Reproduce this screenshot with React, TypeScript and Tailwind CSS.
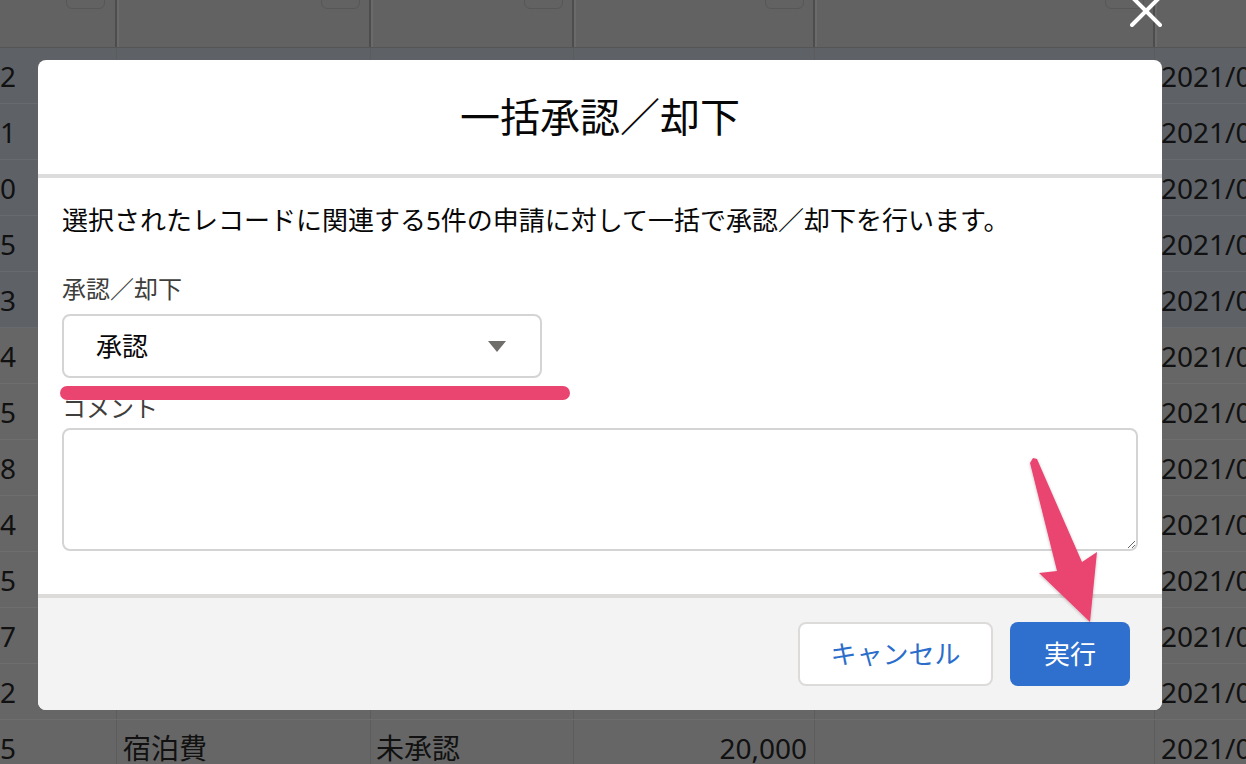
import React from 'react';

const FONT = { fontFamily: '"Noto Sans", "Noto Sans CJK JP", sans-serif' };

const ROWS = [
  { id: 1, n: '2', sel: true },
  { id: 2, n: '1', sel: true },
  { id: 3, n: '0', sel: true },
  { id: 4, n: '5', sel: true },
  { id: 5, n: '3', sel: true },
  { id: 6, n: '4' },
  { id: 7, n: '5' },
  { id: 8, n: '8' },
  { id: 9, n: '4' },
  { id: 10, n: '5' },
  { id: 11, n: '7' },
  { id: 12, n: '2' },
  { id: 13, n: '5', item: '宿泊費', status: '未承認', amount: '20,000' },
];

type Row = { id: number; n: string; sel?: boolean; item?: string; status?: string; amount?: string };

const SortBox = () => (
  <div className="w-[39px] h-[22px] -mt-[13px] rounded-[6px] border border-[#575757]"></div>
);

const HeaderRow: React.FC = () => (
  <div className="flex h-[48px] bg-[#626262] border-b border-[#555555]">
    <div className="w-[117px] shrink-0 flex justify-end pr-[10px] border-r-[2px] border-[#4d4d4d]"><SortBox /></div>
    <div className="w-[254px] shrink-0 flex justify-end pr-[9px] border-r-[2px] border-[#4d4d4d] border-l-[2px] border-l-[#6a6a6a]"><SortBox /></div>
    <div className="w-[203px] shrink-0 flex justify-end pr-[9px] border-r-[2px] border-[#4d4d4d] border-l-[2px] border-l-[#6a6a6a]"><SortBox /></div>
    <div className="w-[241px] shrink-0 flex justify-end pr-[9px] border-r-[2px] border-[#4d4d4d] border-l-[2px] border-l-[#6a6a6a]"><SortBox /></div>
    <div className="w-[340px] shrink-0 flex justify-end pr-[9px] border-r-[2px] border-[#4d4d4d] border-l-[2px] border-l-[#6a6a6a]"><SortBox /></div>
    <div className="flex-1 min-w-0 border-l-[2px] border-l-[#6a6a6a]"></div>
  </div>
);

const BodyRow: React.FC<{ row: Row }> = ({ row }) => (
  <div
    className={`flex h-[56px] border-b ${row.sel ? 'bg-[#5e6267] border-[#676b70]' : 'bg-[#666666] border-[#6e6e6e]'} text-[28px] leading-[28px] text-[#111111]`}
  >
    <div className="w-[117px] shrink-0 flex items-center border-r border-[#5c5c5c]">{row.n}</div>
    <div className="w-[254px] shrink-0 flex items-center pl-[6px] border-r border-[#5c5c5c]">{row.item}</div>
    <div className="w-[203px] shrink-0 flex items-center pl-[5px] border-r border-[#5c5c5c]">{row.status}</div>
    <div className="w-[241px] shrink-0 flex items-center justify-end pr-[7px] border-r border-[#5c5c5c]">{row.amount}</div>
    <div className="w-[340px] shrink-0 border-r border-[#5c5c5c]"></div>
    <div className="flex-1 min-w-0 flex items-center pl-[6px] whitespace-nowrap overflow-hidden">2021/07/01</div>
  </div>
);

const Modal: React.FC = () => (
  <div className="absolute left-[38px] top-[60px] w-[1124px] h-[650px] rounded-[8px] bg-white overflow-hidden flex flex-col text-[#080707]">
    <div className="h-[118px] shrink-0 flex items-center justify-center text-[40px] border-b-[4px] border-[#dcdcdc]">
      一括承認／却下
    </div>
    <div className="flex-1 flex flex-col px-[24px] pt-[24px]">
      <p className="text-[26px] leading-[36px]">選択されたレコードに関連する5件の申請に対して一括で承認／却下を行います。</p>
      <label className="mt-[35px] text-[24px] leading-[32px] text-[#3e3e3c]">承認／却下</label>
      <div className="mt-[9px] w-[480px] h-[64px] rounded-[8px] border-[2px] border-[#d4d4d4] flex items-center justify-between pl-[32px] pr-[34px]">
        <span className="text-[26px]">承認</span>
        <svg width="18" height="11" viewBox="0 0 18 11"><polygon points="0,0 18,0 9,11" fill="#706e6b" /></svg>
      </div>
      <label className="mt-[14px] text-[24px] leading-[32px] text-[#3e3e3c]">コメント</label>
      <textarea className="mt-[4px] w-full h-[123px] rounded-[8px] border-[2px] border-[#d4d4d4] outline-none resize-y"></textarea>
    </div>
    <div className="h-[116px] shrink-0 bg-[#f3f3f3] border-t-[4px] border-[#dddbda] flex items-center justify-end gap-[17px] pr-[32px]">
      <button className="w-[195px] h-[64px] rounded-[8px] border-[2px] border-[#dddbda] bg-white text-[26px] text-[#2a6dcb]">キャンセル</button>
      <button className="w-[120px] h-[64px] rounded-[8px] bg-[#2f6fcd] text-[26px] text-white">実行</button>
    </div>
  </div>
);

const App: React.FC = () => {
  return (
    <div className="relative w-[1246px] h-[764px] overflow-hidden bg-[#666666]" style={FONT}>
      <HeaderRow />
      {ROWS.map((row) => (
        <BodyRow key={row.id} row={row} />
      ))}

      {/* close icon */}
      <svg className="absolute left-[1130px] top-[-5px]" width="32" height="32" viewBox="0 0 32 32">
        <path d="M2 2 L30 30 M30 2 L2 30" stroke="#ffffff" strokeWidth="4" strokeLinecap="round" />
      </svg>

      <Modal />

      {/* annotations */}
      <div className="absolute left-[60px] top-[386px] w-[510px] h-[14px] rounded-full bg-[#ea4570]"></div>
      <svg className="absolute left-0 top-0 pointer-events-none" width="1246" height="764" viewBox="0 0 1246 764">
        <defs>
          <filter id="sh" x="-20%" y="-20%" width="140%" height="140%">
            <feDropShadow dx="0" dy="1" stdDeviation="1.5" floodColor="#000000" floodOpacity="0.25" />
          </filter>
        </defs>
        <polygon
          points="1030,463 1033,458 1037,459 1082,562 1097,552 1090,622 1039,573 1057,571"
          fill="#ea4570"
          strokeLinejoin="round"
          filter="url(#sh)"
        />
      </svg>
    </div>
  );
};

export default App;
